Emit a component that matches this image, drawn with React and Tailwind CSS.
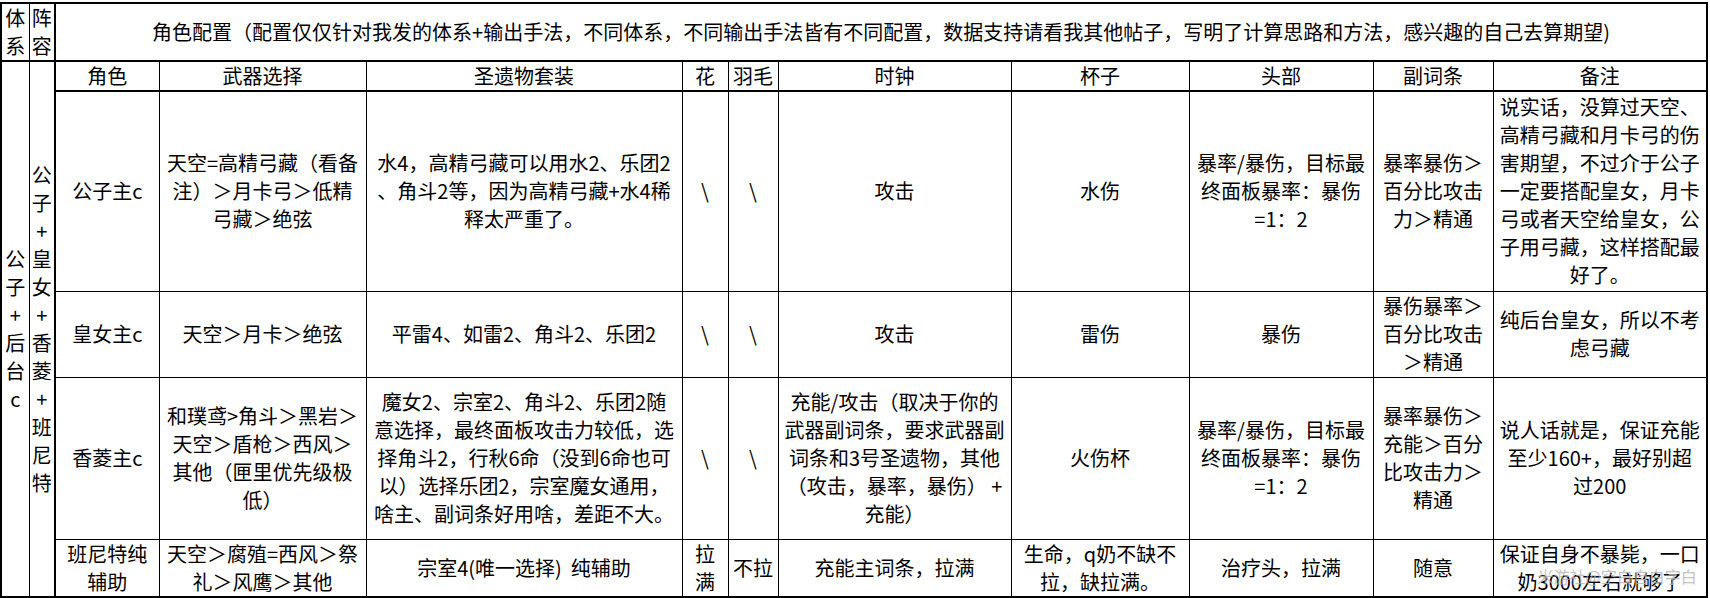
import React from 'react';

const cols = [28, 26, 104, 207, 316, 46, 50, 233, 178, 184, 120, 214];

const headers = ['角色', '武器选择', '圣遗物套装', '花', '羽毛', '时钟', '杯子', '头部', '副词条', '备注'];

const rows = [
  {
    h: 'h-[200px]',
    cells: [
      ['公子主c'],
      ['天空=高精弓藏（看备', '注）＞月卡弓＞低精', '弓藏＞绝弦'],
      ['水4，高精弓藏可以用水2、乐团2', '、角斗2等，因为高精弓藏+水4稀', '释太严重了。'],
      ['\\'],
      ['\\'],
      ['攻击'],
      ['水伤'],
      ['暴率/暴伤，目标最', '终面板暴率：暴伤', '=1：2'],
      ['暴率暴伤＞', '百分比攻击', '力＞精通'],
      ['说实话，没算过天空、', '高精弓藏和月卡弓的伤', '害期望，不过介于公子', '一定要搭配皇女，月卡', '弓或者天空给皇女，公', '子用弓藏，这样搭配最', '好了。'],
    ],
  },
  {
    h: 'h-[86px]',
    cells: [
      ['皇女主c'],
      ['天空＞月卡＞绝弦'],
      ['平雷4、如雷2、角斗2、乐团2'],
      ['\\'],
      ['\\'],
      ['攻击'],
      ['雷伤'],
      ['暴伤'],
      ['暴伤暴率＞', '百分比攻击', '＞精通'],
      ['纯后台皇女，所以不考', '虑弓藏'],
    ],
  },
  {
    h: 'h-[162px]',
    cells: [
      ['香菱主c'],
      ['和璞鸢>角斗＞黑岩＞', '天空＞盾枪＞西风＞', '其他（匣里优先级极', '低）'],
      ['魔女2、宗室2、角斗2、乐团2随', '意选择，最终面板攻击力较低，选', '择角斗2，行秋6命（没到6命也可', '以）选择乐团2，宗室魔女通用，', '啥主、副词条好用啥，差距不大。'],
      ['\\'],
      ['\\'],
      ['充能/攻击（取决于你的', '武器副词条，要求武器副', '词条和3号圣遗物，其他', '（攻击，暴率，暴伤） +', '充能）'],
      ['火伤杯'],
      ['暴率/暴伤，目标最', '终面板暴率：暴伤', '=1：2'],
      ['暴率暴伤＞', '充能＞百分', '比攻击力＞', '精通'],
      ['说人话就是，保证充能', '至少160+，最好别超', '过200'],
    ],
  },
  {
    h: 'h-[58px]',
    last: true,
    cells: [
      ['班尼特纯', '辅助'],
      ['天空＞腐殖=西风＞祭', '礼＞风鹰＞其他'],
      ['宗室4(唯一选择)  纯辅助'],
      ['拉', '满'],
      ['不拉'],
      ['充能主词条，拉满'],
      ['生命，q奶不缺不', '拉，缺拉满。'],
      ['治疗头，拉满'],
      ['随意'],
      ['保证自身不暴毙，一口', '奶3000左右就够了'],
    ],
  },
];

const Lines = ({ lines }) =>
  lines.map((line, i) => (
    <div key={i} className="whitespace-pre">
      {line}
    </div>
  ));

export default function App() {
  return (
    <div className="w-[1710px] h-[598px] bg-white pt-[2px] overflow-hidden font-['Noto_Sans_CJK_SC',sans-serif] text-[20px] leading-[28px] text-black">
      <table className="table-fixed border-collapse border-2 border-black w-[1707px]">
        <colgroup>
          {cols.map((w, i) => (
            <col key={i} style={{ width: w }} />
          ))}
        </colgroup>
        <tbody>
          <tr className="h-[58px]">
            <td className="border border-black border-b-2 text-center p-0">
              <Lines lines={['体', '系']} />
            </td>
            <td className="border border-black border-b-2 border-r-2 text-center p-0">
              <Lines lines={['阵', '容']} />
            </td>
            <td colSpan={10} className="border border-black border-b-2 text-center p-0">
              角色配置（配置仅仅针对我发的体系+输出手法，不同体系，不同输出手法皆有不同配置，数据支持请看我其他帖子，写明了计算思路和方法，感兴趣的自己去算期望)
            </td>
          </tr>
          <tr className="h-[29px]">
            <td rowSpan={5} className="border border-black border-b-2 text-center p-0">
              <Lines lines={['公', '子', '+', '后', '台', 'c']} />
            </td>
            <td rowSpan={5} className="border border-black border-b-2 border-r-2 text-center p-0">
              <Lines lines={['公', '子', '+', '皇', '女', '+', '香', '菱', '+', '班', '尼', '特']} />
            </td>
            {headers.map((t) => (
              <td key={t} className="border border-black border-b-2 text-center p-0 whitespace-nowrap">
                {t}
              </td>
            ))}
          </tr>
          {rows.map((row, ri) => (
            <tr key={ri} className={row.h}>
              {row.cells.map((lines, ci) => (
                <td
                  key={ci}
                  className={`border border-black text-center p-0 ${row.last ? 'border-b-2' : ''} ${
                    row.last && ci === 9 ? 'relative' : ''
                  }`}
                >
                  <Lines lines={lines} />
                  {row.last && ci === 9 && (
                    <span className="absolute left-[44px] top-[26px] text-[16px] leading-[20px] text-[#b4b4b4] opacity-80 whitespace-nowrap">
                      米游社@空白自白字白
                    </span>
                  )}
                </td>
              ))}
            </tr>
          ))}
        </tbody>
      </table>
    </div>
  );
}
